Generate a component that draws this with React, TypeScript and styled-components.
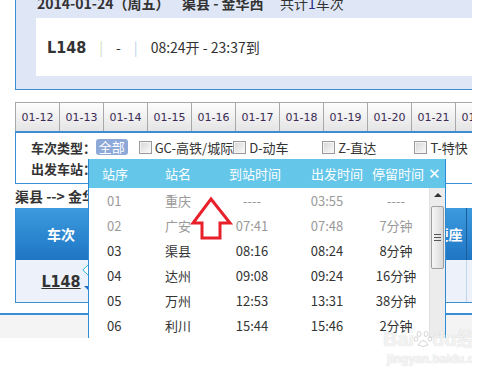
import React from 'react'
import styled, { createGlobalStyle } from 'styled-components'

const GlobalStyle = createGlobalStyle`
  html, body {
    margin: 0;
    padding: 0;
    background: #ffffff;
  }
  body {
    font-family: "Noto Sans CJK SC", "Noto Sans", sans-serif;
    color: #333333;
  }
  * {
    box-sizing: border-box;
  }
`

const BLUE = '#3c8ed2'

const Page = styled.div`
  position: relative;
  display: flex;
  flex-direction: column;
  width: 472px;
  height: 375px;
  overflow: hidden;
`

// ---- summary panel at the top ----
const TopPanel = styled.div`
  margin: -6px 0 0 15px;
  padding: 0 0 13px 20px;
  background: #dfe7f7;
  border-left: 1px solid ${BLUE};
  border-bottom: 1px solid ${BLUE};
`
const Heading = styled.div`
  display: flex;
  height: 18px;
  line-height: 18px;
  padding-left: 1px;
  font-size: 14px;
  white-space: nowrap;
`
const HeadingPart = styled.span<{ w?: number; bold?: boolean }>`
  width: ${(p) => (p.w ? `${p.w}px` : 'auto')};
  font-weight: ${(p) => (p.bold ? 'bold' : 'normal')};
`
const Count = styled.span`
  color: #2a2a8a;
`
const TrainBox = styled.div`
  display: flex;
  align-items: center;
  gap: 13px;
  height: 58px;
  margin-top: 6px;
  padding-left: 11px;
  background: #ffffff;
  font-size: 14px;
`
const TrainNo = styled.span`
  font-family: "DejaVu Sans Condensed", "DejaVu Sans", sans-serif;
  font-weight: bold;
  font-size: 16px;
  color: #333;
`
const Sep = styled.span<{ tint: string }>`
  color: ${(p) => p.tint};
`

// ---- date tabs ----
const Tabs = styled.div`
  display: flex;
  width: 457px;
  height: 29px;
  margin: 12px 0 0 15px;
  overflow: hidden;
`
const Tab = styled.div`
  flex: 0 0 44px;
  display: flex;
  align-items: center;
  justify-content: center;
  border-top: 1px solid #a8a8a8;
  border-left: 1px solid #a8a8a8;
  background: linear-gradient(#fdfdfd, #e4e4e4);
  font-family: "DejaVu Sans", sans-serif;
  font-size: 11px;
  color: #3a2a55;
`

// ---- filter panel ----
const FilterPanel = styled.div`
  width: 457px;
  margin-left: 15px;
  padding: 4px 0 5px 15px;
  border-top: 2px solid ${BLUE};
  border-left: 1px solid ${BLUE};
  border-bottom: 1px solid ${BLUE};
  display: flex;
  flex-direction: column;
  gap: 1px;
`
const FilterRow = styled.div`
  display: flex;
  align-items: center;
  height: 20px;
  font-size: 13px;
  white-space: nowrap;
`
const FilterLabel = styled.span`
  width: 65px;
  font-weight: bold;
`
const Badge = styled.span`
  width: 33px;
  height: 16px;
  line-height: 16px;
  margin-right: 11px;
  border-radius: 3px;
  background: #8ea8d8;
  color: #ffffff;
  text-align: center;
`
const FilterItem = styled.label<{ w: number }>`
  display: flex;
  align-items: center;
  gap: 3px;
  width: ${(p) => p.w}px;
`
const Check = styled.span`
  width: 13px;
  height: 13px;
  border: 1px solid #9a9a9a;
  background: linear-gradient(135deg, #d6d6d6, #fbfbfb);
  box-shadow: inset 0 0 0 1px #f4f4f4;
`

// ---- result table ----
const RouteTitle = styled.div`
  margin: 2px 0 0 15px;
  height: 20px;
  line-height: 20px;
  font-size: 14px;
  font-weight: bold;
  white-space: nowrap;
`
const Table = styled.div`
  width: 457px;
  margin: 2px 0 0 15px;
  border-left: 1px solid ${BLUE};
  border-bottom: 1px solid ${BLUE};
  overflow: hidden;
`
const COLS = '91px 62px 62px 60px 60px 44px 36px 36px 60px'
const HeadRow = styled.div`
  display: grid;
  grid-template-columns: ${COLS};
  height: 52px;
  background: linear-gradient(#3c9ade, #1f76c4);
`
const HeadCell = styled.div`
  display: flex;
  align-items: center;
  justify-content: center;
  border-right: 1px solid #1a5c9c;
  color: #ffffff;
  font-size: 14px;
  font-weight: bold;
  white-space: nowrap;
  overflow: hidden;
`
const BodyRow = styled.div`
  display: grid;
  grid-template-columns: ${COLS};
  height: 42px;
  background: #edf1fa;
`
const BodyCell = styled.div`
  display: flex;
  align-items: center;
  justify-content: center;
  border-right: 1px solid #c3d5ec;
`
const TrainLink = styled.a`
  font-family: "DejaVu Sans Condensed", "DejaVu Sans", sans-serif;
  font-weight: bold;
  font-size: 16px;
  color: #333;
  text-decoration: underline;
`
const Footer = styled.div`
  width: 472px;
  height: 25px;
  margin-top: 10px;
  border-top: 2px solid ${BLUE};
  background: #f4f4f4;
`

// ---- stop list popup ----
const Popup = styled.div`
  position: absolute;
  left: 88px;
  top: 159px;
  width: 358px;
  border-left: 1px solid #2e8bd6;
  border-right: 1px solid #2e8bd6;
  background: #ffffff;
`
const PopHead = styled.div`
  display: flex;
  align-items: center;
  height: 29px;
  padding-left: 13px;
  background: #64c6e8;
  color: #ffffff;
  font-size: 13px;
  white-space: nowrap;
`
const PopHeadCell = styled.span<{ w: number }>`
  width: ${(p) => p.w}px;
`
const Close = styled.span`
  font-family: "DejaVu Sans", sans-serif;
  font-size: 15px;
  font-weight: bold;
`
const PopBody = styled.div`
  display: flex;
  height: 150px;
`
const StopList = styled.div`
  width: 340px;
`
const StopRow = styled.div<{ passed: boolean }>`
  display: grid;
  grid-template-columns: 76px 50px 74px 76px 62px;
  align-items: center;
  height: 25px;
  line-height: 18px;
  font-size: 13px;
  color: ${(p) => (p.passed ? '#9a9a9a' : '#333333')};
  white-space: nowrap;
`
const Seq = styled.span`
  padding-left: 18px;
`
const Centered = styled.span`
  text-align: center;
`
const ScrollBar = styled.div`
  position: relative;
  width: 16px;
  background: #ececec;
  border-left: 1px solid #e0e0e0;
`
const ScrollUp = styled.div`
  margin: 5px auto 0;
  width: 0;
  height: 0;
  border-left: 4px solid transparent;
  border-right: 4px solid transparent;
  border-bottom: 4px solid #333;
`
const Thumb = styled.div`
  display: flex;
  flex-direction: column;
  justify-content: center;
  align-items: center;
  gap: 2px;
  width: 13px;
  height: 63px;
  margin: 9px 0 0 1px;
  border: 1px solid #9e9e9e;
  border-radius: 2px;
  background: linear-gradient(90deg, #f6f6f6, #d9d9d9);
`
const Grip = styled.span`
  width: 7px;
  height: 1px;
  background: #555;
`

const Overlay = styled.svg<{ x: number; y: number }>`
  position: absolute;
  left: ${(p) => p.x}px;
  top: ${(p) => p.y}px;
  overflow: visible;
`
const Watermark = styled.div`
  position: absolute;
  left: 383px;
  top: 329px;
  display: flex;
  flex-direction: column;
  align-items: center;
  color: rgba(255, 255, 255, 0.75);
  text-shadow: 0 0 1px rgba(150, 150, 150, 0.5);
  font-family: "Liberation Sans", sans-serif;
  white-space: nowrap;
  pointer-events: none;
`
const WmTitle = styled.div`
  display: flex;
  align-items: center;
  font-size: 20px;
  font-weight: bold;
  line-height: 20px;
`
const WmUrl = styled.div`
  font-size: 12px;
  font-weight: bold;
  line-height: 12px;
  margin-top: 4px;
`

const dates = ['01-12', '01-13', '01-14', '01-15', '01-16', '01-17', '01-18', '01-19', '01-20', '01-21', '01-22']

const stops = [
  { seq: '01', name: '重庆', arr: '----', dep: '03:55', stay: '----', passed: true },
  { seq: '02', name: '广安', arr: '07:41', dep: '07:48', stay: '7分钟', passed: true },
  { seq: '03', name: '渠县', arr: '08:16', dep: '08:24', stay: '8分钟', passed: false },
  { seq: '04', name: '达州', arr: '09:08', dep: '09:24', stay: '16分钟', passed: false },
  { seq: '05', name: '万州', arr: '12:53', dep: '13:31', stay: '38分钟', passed: false },
  { seq: '06', name: '利川', arr: '15:44', dep: '15:46', stay: '2分钟', passed: false },
]

// columns hidden under the popup are left blank
const heads = ['车次', '', '', '', '', '', '', '硬座', '']

export default function App() {
  return (
    <>
      <GlobalStyle />
      <Page>
        <TopPanel>
          <Heading>
            <HeadingPart w={145} bold>2014-01-24（周五）</HeadingPart>
            <HeadingPart w={98} bold>渠县 - 金华西</HeadingPart>
            <HeadingPart>共计<Count>1</Count>车次</HeadingPart>
          </Heading>
          <TrainBox>
            <TrainNo>L148</TrainNo>
            <Sep tint="#c9dcb8">|</Sep>
            <span>-</span>
            <Sep tint="#b6d3ee">|</Sep>
            <span>08:24开 - 23:37到</span>
          </TrainBox>
        </TopPanel>

        <Tabs>
          {dates.map((d) => (
            <Tab key={d}>{d}</Tab>
          ))}
        </Tabs>

        <FilterPanel>
          <FilterRow>
            <FilterLabel>车次类型：</FilterLabel>
            <Badge>全部</Badge>
            <FilterItem w={96}><Check />GC-高铁/城际</FilterItem>
            <FilterItem w={93}><Check />D-动车</FilterItem>
            <FilterItem w={96}><Check />Z-直达</FilterItem>
            <FilterItem w={60}><Check />T-特快</FilterItem>
          </FilterRow>
          <FilterRow>
            <FilterLabel>出发车站：</FilterLabel>
          </FilterRow>
        </FilterPanel>

        <RouteTitle>渠县 --&gt; 金华</RouteTitle>
        <Table>
          <HeadRow>
            {heads.map((h, i) => (
              <HeadCell key={i}>{h}</HeadCell>
            ))}
          </HeadRow>
          <BodyRow>
            <BodyCell><TrainLink>L148</TrainLink></BodyCell>
            {heads.slice(1).map((_, i) => (
              <BodyCell key={i} />
            ))}
          </BodyRow>
        </Table>
        <Footer />

        <Overlay x={82} y={264} width="7" height="12">
          <path d="M6.5 0.5 L0.8 6 L6.5 11.5" fill="#ffffff" stroke="#2fb3d9" strokeWidth="1" />
        </Overlay>
        <Overlay x={84} y={286} width="5" height="5">
          <path d="M0 0 L5 0 L5 5 Z" fill="#1f6fc8" />
        </Overlay>

        <Popup>
          <PopHead>
            <PopHeadCell w={63}>站序</PopHeadCell>
            <PopHeadCell w={64}>站名</PopHeadCell>
            <PopHeadCell w={82}>到站时间</PopHeadCell>
            <PopHeadCell w={61}>出发时间</PopHeadCell>
            <PopHeadCell w={56}>停留时间</PopHeadCell>
            <Close>✕</Close>
          </PopHead>
          <PopBody>
            <StopList>
              {stops.map((s) => (
                <StopRow key={s.seq} passed={s.passed}>
                  <Seq>{s.seq}</Seq>
                  <span>{s.name}</span>
                  <Centered>{s.arr}</Centered>
                  <Centered>{s.dep}</Centered>
                  <Centered>{s.stay}</Centered>
                </StopRow>
              ))}
            </StopList>
            <ScrollBar>
              <ScrollUp />
              <Thumb>
                <Grip />
                <Grip />
                <Grip />
              </Thumb>
            </ScrollBar>
          </PopBody>
        </Popup>

        <Overlay x={190} y={195} width="45" height="46">
          <path
            d="M21 4 L40 28 L30 28 L30 43 L12 43 L12 28 L3 28 Z"
            fill="none"
            stroke="#e8202a"
            strokeWidth="3"
            strokeLinejoin="miter"
          />
        </Overlay>

        <Watermark>
          <WmTitle>
            <span>Bai</span>
            <svg width="18" height="18" viewBox="0 0 18 18">
              <g fill="rgba(255,255,255,0.75)" stroke="rgba(150,150,150,0.5)" strokeWidth="0.8">
                <ellipse cx="5" cy="4" rx="2" ry="2.5" />
                <ellipse cx="12" cy="4" rx="2" ry="2.5" />
                <ellipse cx="2" cy="9" rx="1.8" ry="2.2" />
                <ellipse cx="16" cy="9" rx="1.8" ry="2.2" />
                <path d="M4 15 Q9 6 14 15 Q9 18 4 15 Z" />
              </g>
            </svg>
            <span>du经验</span>
          </WmTitle>
          <WmUrl>jingyan.baidu.com</WmUrl>
        </Watermark>
      </Page>
    </>
  )
}
